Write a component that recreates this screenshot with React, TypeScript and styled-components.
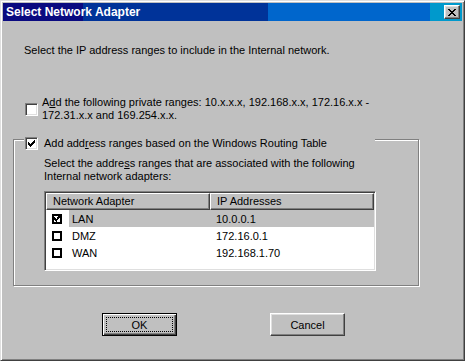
import React from "react";
import styled, { createGlobalStyle } from "styled-components";

const GlobalStyle = createGlobalStyle`
  html, body {
    margin: 0;
    padding: 0;
    background: #c0c0c0;
  }
  body {
    font-family: "Liberation Sans", Arial, sans-serif;
    font-size: 11px;
    color: #000;
  }
`;

interface Adapter {
  name: string;
  ip: string;
  checked: boolean;
  selected: boolean;
}

const adapters: Adapter[] = [
  { name: "LAN", ip: "10.0.0.1", checked: true, selected: true },
  { name: "DMZ", ip: "172.16.0.1", checked: false, selected: false },
  { name: "WAN", ip: "192.168.1.70", checked: false, selected: false },
];

// classic 7x7 check glyph
const CheckGlyph: React.FC = () => (
  <svg width="7" height="7" viewBox="0 0 7 7" shapeRendering="crispEdges">
    <path
      d="M0 2h1v3h-1z M1 3h1v3h-1z M2 4h1v3h-1z M3 3h1v3h-1z M4 2h1v3h-1z M5 1h1v3h-1z M6 0h1v3h-1z"
      fill="#000"
    />
  </svg>
);

const CloseGlyph: React.FC = () => (
  <svg width="8" height="7" viewBox="0 0 8 7" shapeRendering="crispEdges">
    <path
      d="M0 0h2v1h-2z M6 0h2v1h-2z M1 1h2v1h-2z M5 1h2v1h-2z M2 2h4v1h-4z M3 3h2v1h-2z M2 4h4v1h-4z M1 5h2v1h-2z M5 5h2v1h-2z M0 6h2v1h-2z M6 6h2v1h-2z"
      fill="#000"
    />
  </svg>
);

const Checkbox: React.FC<{ checked?: boolean }> = ({ checked }) => (
  <Box>{checked && <CheckGlyph />}</Box>
);

const ListCheck: React.FC<{ checked?: boolean }> = ({ checked }) => (
  <FlatBox>{checked && <CheckGlyph />}</FlatBox>
);

const App: React.FC = () => {
  return (
    <>
      <GlobalStyle />
      <Window>
        <TitleBar>
          <Title>Select Network Adapter</Title>
          <CloseButton>
            <CloseGlyph />
          </CloseButton>
        </TitleBar>

        <Body>
          <Intro>Select the IP address ranges to include in the Internal network.</Intro>

          <OptionRow>
            <Checkbox />
            <OptionLabel>
              A<u>d</u>d the following private ranges: 10.x.x.x, 192.168.x.x, 172.16.x.x -
              <br />
              172.31.x.x and 169.254.x.x.
            </OptionLabel>
          </OptionRow>

          <Group>
            <Legend>
              <Checkbox checked />
              <LegendLabel>
                Add add<u>r</u>ess ranges based on the Windows Routing Table
              </LegendLabel>
            </Legend>

            <GroupText>
              Select the addre<u>s</u>s ranges that are associated with the following
              <br />
              Internal network adapters:
            </GroupText>

            <ListView>
              <HeaderRow>
                <HeaderCell $width={164}>Network Adapter</HeaderCell>
                <HeaderCell $width={164}>IP Addresses</HeaderCell>
              </HeaderRow>
              {adapters.map((a) => (
                <Row key={a.name}>
                  <ListCheck checked={a.checked} />
                  <RowBody $selected={a.selected}>
                    <NameCell>{a.name}</NameCell>
                    <IpCell>{a.ip}</IpCell>
                  </RowBody>
                </Row>
              ))}
            </ListView>
          </Group>

          <ButtonRow>
            <DefaultButton>
              <FocusRect>OK</FocusRect>
            </DefaultButton>
            <Button>Cancel</Button>
          </ButtonRow>
        </Body>
      </Window>
    </>
  );
};

export default App;

const Window = styled.div`
  width: 465px;
  height: 361px;
  box-sizing: border-box;
  background: #c0c0c0;
  border-style: solid;
  border-width: 1px;
  border-color: #dfdfdf #404040 #404040 #dfdfdf;
  box-shadow: inset 1px 1px 0 #fff, inset -1px -1px 0 #808080;
  padding: 2px;
  display: flex;
  flex-direction: column;
`;

const TitleBar = styled.div`
  height: 18px;
  display: flex;
  align-items: center;
  justify-content: space-between;
  background: linear-gradient(
    to right,
    #0a0a80 0 80px,
    #003399 80px 265px,
    #0066cc 265px 427px,
    #0099cc 427px
  );
`;

const Title = styled.span`
  padding-left: 3px;
  color: #fff;
  font-weight: bold;
  font-size: 12px;
`;

const CloseButton = styled.div`
  width: 16px;
  height: 14px;
  margin-right: 2px;
  box-sizing: border-box;
  background: #c0c0c0;
  border-style: solid;
  border-width: 1px;
  border-color: #fff #404040 #404040 #fff;
  box-shadow: inset -1px -1px 0 #808080, inset 1px 1px 0 #dfdfdf;
  display: flex;
  align-items: center;
  justify-content: center;
  padding-right: 1px;
`;

const Body = styled.div`
  flex: 1;
  display: flex;
  flex-direction: column;
  padding-left: 10px;
`;

const Intro = styled.div`
  margin: 23px 0 0 11px;
  line-height: 13px;
`;

const OptionRow = styled.div`
  display: flex;
  align-items: center;
  margin-top: 39px;
`;

const Box = styled.div`
  width: 13px;
  height: 13px;
  flex-shrink: 0;
  box-sizing: border-box;
  background: #fff;
  border-style: solid;
  border-width: 1px;
  border-color: #808080 #fff #fff #808080;
  box-shadow: inset 1px 1px 0 #404040, inset -1px -1px 0 #dfdfdf;
  display: flex;
  align-items: center;
  justify-content: center;
  margin-left: 12px;
`;

const OptionLabel = styled.div`
  margin-left: 4px;
  line-height: 13px;
`;

const Group = styled.div`
  margin-top: 17px;
  width: 406px;
  height: 147px;
  box-sizing: border-box;
  border: 1px solid #808080;
  box-shadow: 1px 1px 0 #fff, inset 1px 1px 0 #fff;
  display: flex;
  flex-direction: column;
`;

const Legend = styled.div`
  margin: -3px 0 0 10px;
  width: 351px;
  height: 13px;
  background: #c0c0c0;
  display: flex;
  align-items: center;

  ${Box} {
    margin-left: 1px;
  }
`;

const LegendLabel = styled.span`
  margin-left: 6px;
  line-height: 13px;
`;

const GroupText = styled.div`
  margin: 7px 0 0 30px;
  line-height: 13px;
`;

const ListView = styled.div`
  margin: 8px 0 0 30px;
  width: 332px;
  height: 80px;
  box-sizing: border-box;
  background: #fff;
  border-style: solid;
  border-width: 1px;
  border-color: #808080 #fff #fff #808080;
  box-shadow: inset 1px 1px 0 #404040, inset -1px -1px 0 #dfdfdf;
  padding: 1px;
`;

const HeaderRow = styled.div`
  display: flex;
  height: 17px;
  background: #c0c0c0;
`;

const HeaderCell = styled.div<{ $width: number }>`
  width: ${({ $width }) => $width}px;
  box-sizing: border-box;
  border-style: solid;
  border-width: 1px;
  border-color: #fff #404040 #404040 #fff;
  box-shadow: inset -1px -1px 0 #808080;
  padding-left: 6px;
  line-height: 15px;
  white-space: nowrap;
`;

const Row = styled.div`
  display: flex;
  align-items: center;
  height: 17px;
`;

const FlatBox = styled.div`
  width: 10px;
  height: 10px;
  box-sizing: border-box;
  margin-left: 6px;
  border: 2px solid #000;
  background: #fff;
  display: flex;
  align-items: center;
  justify-content: center;
  flex-shrink: 0;
`;

const RowBody = styled.div<{ $selected: boolean }>`
  margin-left: 7px;
  flex: 1;
  height: 100%;
  display: flex;
  align-items: center;
  background: ${({ $selected }) => ($selected ? "#c0c0c0" : "transparent")};
`;

const NameCell = styled.span`
  width: 140px;
  padding-left: 3px;
`;

const IpCell = styled.span`
  padding-left: 4px;
`;

const ButtonRow = styled.div`
  display: flex;
  margin: 27px 0 0 89px;
  gap: 93px;
`;

const Button = styled.div`
  width: 75px;
  height: 23px;
  box-sizing: border-box;
  border-style: solid;
  border-width: 1px;
  border-color: #fff #404040 #404040 #fff;
  box-shadow: inset -1px -1px 0 #808080, inset 1px 1px 0 #dfdfdf;
  display: flex;
  align-items: center;
  justify-content: center;
`;

const DefaultButton = styled(Button)`
  border: 1px solid #000;
  box-shadow: inset 1px 1px 0 #fff, inset -1px -1px 0 #404040,
    inset -2px -2px 0 #808080;
  padding: 3px;
`;

const FocusRect = styled.div`
  flex: 1;
  align-self: stretch;
  border: 1px dotted #000;
  display: flex;
  align-items: center;
  justify-content: center;
`;
